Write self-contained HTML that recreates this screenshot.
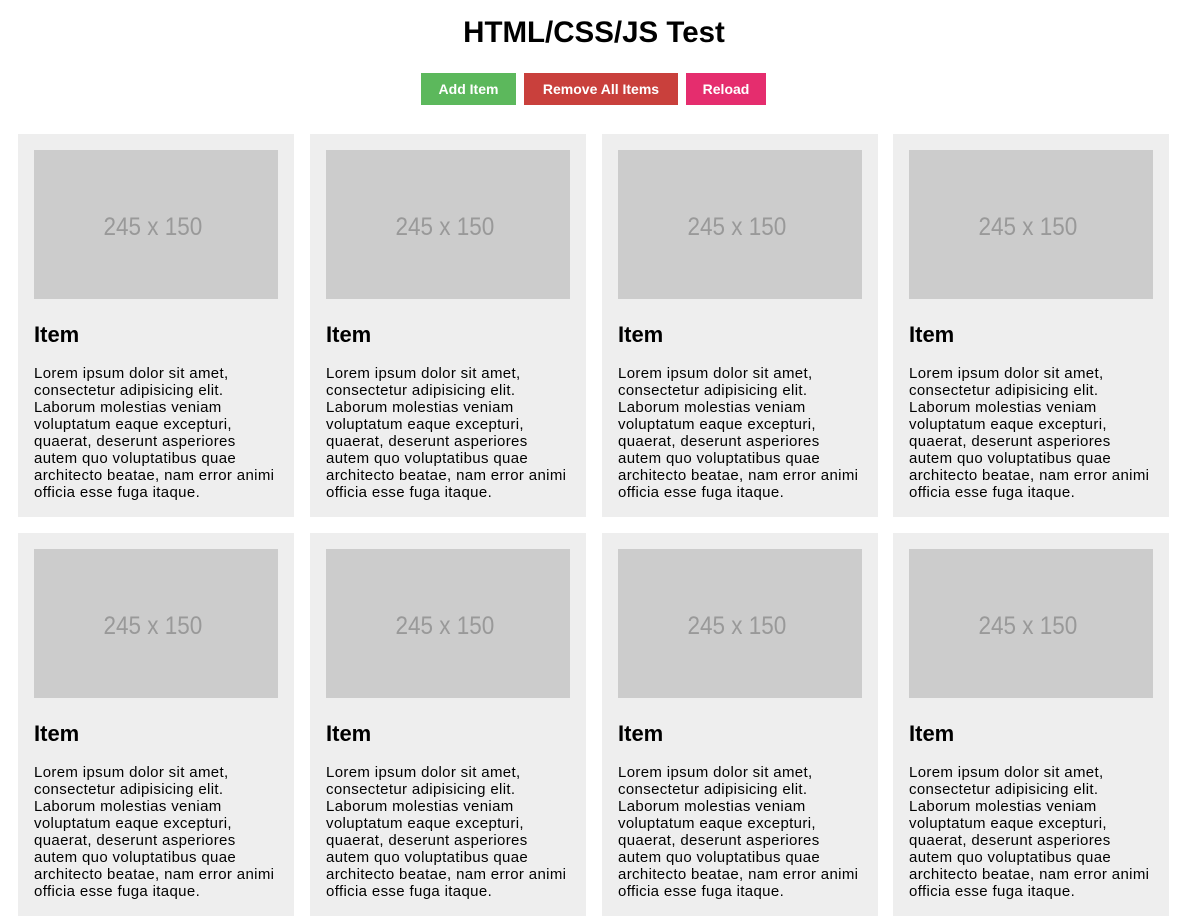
<!DOCTYPE html>
<html><head><meta charset="utf-8"><style>
body{margin:0;width:1188px;height:901px;overflow:hidden;background:#fff;font-family:"Liberation Sans",Helvetica,Arial,sans-serif;position:relative}
h1{position:absolute;top:14px;left:0;width:1188px;margin:0;text-align:center;font-size:29.5px;line-height:38px;font-weight:bold;color:#000}
.btn{position:absolute;top:73px;height:32px;line-height:32px;color:#fff;font-size:14px;font-weight:bold;text-align:center}
.card{position:absolute;width:276px;height:383px;background:#eee}
.img{position:absolute;left:16px;top:16px;width:244px;height:149px;background:#ccc;color:#999;font-size:25px;line-height:155px;text-align:center}
.img span{display:inline-block;transform:scaleX(.9);margin-left:-6px}
.t{position:absolute;left:16px;top:187px;font-size:22px;font-weight:bold;line-height:28px;color:#000}
.p{position:absolute;left:16px;top:231px;font-size:15px;letter-spacing:0.35px;line-height:17px;color:#000;white-space:nowrap}
</style></head><body>
<h1>HTML/CSS/JS Test</h1>
<div class="btn" style="left:421px;width:95px;background:#5cb85c">Add Item</div>
<div class="btn" style="left:524px;width:154px;background:#c9403c">Remove All Items</div>
<div class="btn" style="left:686px;width:80px;background:#e52d6e">Reload</div>
<div id="g"></div>
<script>
var xs=[18,310,602,893],ys=[134,533],h='';
ys.forEach(function(y){xs.forEach(function(x){
h+='<div class="card" style="left:'+x+'px;top:'+y+'px"><div class="img"><span>245 x 150</span></div><div class="t">Item</div><div class="p">Lorem ipsum dolor sit amet,<br>consectetur adipisicing elit.<br>Laborum molestias veniam<br>voluptatum eaque excepturi,<br>quaerat, deserunt asperiores<br>autem quo voluptatibus quae<br>architecto beatae, nam error animi<br>officia esse fuga itaque.</div></div>';
});});
document.getElementById('g').innerHTML=h;
</script>
</body></html>
